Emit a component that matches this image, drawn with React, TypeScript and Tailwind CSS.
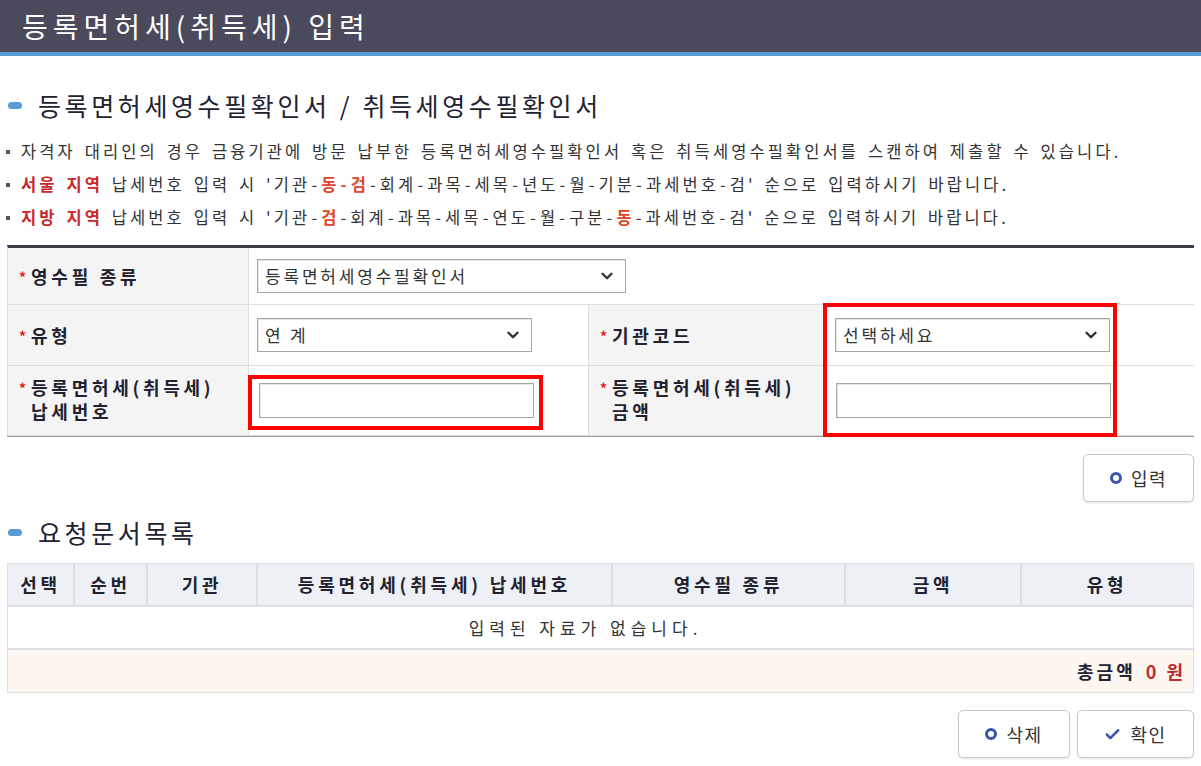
import React from "react";
import { ChevronDown, Check } from "lucide-react";

const Star = () => (
  <span className="text-[#e0201b] text-[14px] font-bold mr-[5px] relative top-[1px] tracking-normal">*</span>
);

const Ring = () => (
  <span className="inline-block w-[12px] h-[12px] rounded-full border-[3px] border-[#3b54b0] mr-[9px]" />
);

const Dash = () => <span className="mx-[1px]">-</span>;

function SelectBox({ text, w }: { text: string; w: string }) {
  return (
    <div
      className={`${w} h-[34px] border border-[#a6a6a6] shadow-[inset_1px_1px_0_#e4e4e4] bg-white flex items-center justify-between pl-[7px] pr-[9px] text-[17px] text-[#333] tracking-[2.8px]`}
    >
      <span>{text}</span>
      <ChevronDown size={18} strokeWidth={3.2} color="#333" />
    </div>
  );
}

function InputBox({ w }: { w: string }) {
  return <div className={`${w} h-[35px] border border-[#a6a6a6] shadow-[inset_1px_1px_0_#e4e4e4] bg-white`} />;
}

const labelCls =
  "bg-[#f4f4f4] border-b border-r border-[#dedede] flex items-center pl-[11px] text-[18px] font-bold text-[#222230] tracking-[3.7px] leading-[24px]";
const valueCls = "border-b border-r border-[#dedede] flex items-center";

export default function App() {
  return (
    <div className="relative w-[1201px] h-[766px] overflow-hidden bg-white font-['Noto_Sans_CJK_KR','Noto_Sans',sans-serif] text-[#333]">
      {/* header */}
      <div className="h-[56px] bg-[#4a4a5c] border-b-[4px] border-[#5b9bd5] flex items-center pl-[22px]">
        <h1 className="text-[28px] text-white tracking-[5px] leading-none">등록면허세(취득세) 입력</h1>
      </div>

      <div className="px-[7px]">
        {/* section heading */}
        <div className="mt-[33px] h-[32px] flex items-center">
          <span className="ml-[1px] w-[14px] h-[7px] rounded-full bg-[#5b9bd5] mr-[16px]" />
          <h2 className="text-[25px] text-[#222230] tracking-[3.6px] leading-none">
            등록면허세영수필확인서 / 취득세영수필확인서
          </h2>
        </div>

        {/* notes */}
        <div className="mt-[14px] text-[16.5px] tracking-[3.1px] [word-spacing:2px]">
          <div className="h-[33px] flex items-center">
            <span className="w-[4px] h-[4px] bg-[#555] mr-[11px] -ml-[1px]" />
            <span>자격자 대리인의 경우 금융기관에 방문 납부한 등록면허세영수필확인서 혹은 취득세영수필확인서를 스캔하여 제출할 수 있습니다.</span>
          </div>
          <div className="h-[33px] flex items-center">
            <span className="w-[4px] h-[4px] bg-[#555] mr-[11px] -ml-[1px]" />
            <span>
              <b className="text-[#c8282a]">서울 지역</b> 납세번호 입력 시 '기관<Dash /><b className="text-[#e0452c]">동<Dash />검</b><Dash />회계<Dash />과목<Dash />세목<Dash />년도<Dash />월<Dash />기분<Dash />과세번호<Dash />검' 순으로 입력하시기 바랍니다.
            </span>
          </div>
          <div className="h-[33px] flex items-center">
            <span className="w-[4px] h-[4px] bg-[#555] mr-[11px] -ml-[1px]" />
            <span>
              <b className="text-[#c8282a]">지방 지역</b> 납세번호 입력 시 '기관<Dash /><b className="text-[#e0452c]">검</b><Dash />회계<Dash />과목<Dash />세목<Dash />연도<Dash />월<Dash />구분<Dash /><b className="text-[#e0452c]">동</b><Dash />과세번호<Dash />검' 순으로 입력하시기 바랍니다.
            </span>
          </div>
        </div>

        {/* form table */}
        <div className="mt-[11px] border-t-[3px] border-[#3d3d4c] border-l border-l-[#dedede] grid grid-cols-[241px_340px_235px_370px] shadow-[0_1px_0_#9a9a9a]">
          <div className={`${labelCls} h-[57px]`}>
            <Star />영수필 종류
          </div>
          <div className={`${valueCls} col-span-3 pl-[8px] border-r-0`}>
            <SelectBox text="등록면허세영수필확인서" w="w-[369px]" />
          </div>

          <div className={`${labelCls} h-[61px]`}>
            <Star />유형
          </div>
          <div className={`${valueCls} pl-[8px]`}>
            <SelectBox text="연 계" w="w-[275px]" />
          </div>
          <div className={labelCls}>
            <Star />기관코드
          </div>
          <div className={`${valueCls} pl-[11px] border-r-0`}>
            <SelectBox text="선택하세요" w="w-[275px]" />
          </div>

          <div className={`${labelCls} h-[70px] items-start pt-[9px]`}>
            <Star />
            <span>
              등록면허세(취득세)
              <br />
              납세번호
            </span>
          </div>
          <div className={`${valueCls} pl-[10px]`}>
            <InputBox w="w-[275px]" />
          </div>
          <div className={`${labelCls} items-start pt-[9px]`}>
            <Star />
            <span>
              등록면허세(취득세)
              <br />
              금액
            </span>
          </div>
          <div className={`${valueCls} pl-[12px] border-r-0`}>
            <InputBox w="w-[275px]" />
          </div>
        </div>

        {/* input button */}
        <div className="mt-[18px] flex justify-end">
          <button className="w-[111px] h-[48px] rounded-[5px] border border-[#c9c9c9] bg-white shadow-[0_1px_2px_rgba(0,0,0,0.12)] flex items-center justify-center text-[18px] text-[#333] tracking-[1.5px]">
            <Ring />입력
          </button>
        </div>

        {/* list heading */}
        <div className="mt-[14px] h-[32px] flex items-center">
          <span className="ml-[1px] w-[14px] h-[7px] rounded-full bg-[#5b9bd5] mr-[16px]" />
          <h2 className="text-[25px] text-[#222230] tracking-[3.6px] leading-none">요청문서목록</h2>
        </div>

        {/* list table */}
        <div className="mt-[15px] border border-[#dcdfe4]">
          <div className="grid grid-cols-[67px_73px_110px_355px_233px_176px_170px] h-[43px] bg-[#edf1f6] text-[18px] font-bold text-[#222230] tracking-[3.8px] border-b-[2px] border-[#dcdfe4]">
            {["선택", "순번", "기관", "등록면허세(취득세) 납세번호", "영수필 종류", "금액", "유형"].map((h, i) => (
              <div
                key={h}
                className={`flex items-center justify-center ${i < 6 ? "border-r-[2px] border-[#dcdfe4]" : ""}`}
              >
                {h}
              </div>
            ))}
          </div>
          <div className="h-[43px] flex items-center justify-center pr-[30px] text-[17px] text-[#333] border-b-[2px] border-[#dcdfe4] tracking-[5px]">
            입력된 자료가 없습니다.
          </div>
          <div className="h-[42px] bg-[#fdf6f1] flex items-center justify-end pr-[7px] text-[18px] font-bold tracking-[3px]">
            <span className="text-[#222230]">총금액</span>
            <span className="text-[#c0282a] ml-[10px]">0 원</span>
          </div>
        </div>

        {/* bottom buttons */}
        <div className="mt-[17px] flex justify-end gap-[7px]">
          <button className="w-[112px] h-[48px] rounded-[5px] border border-[#c9c9c9] bg-white shadow-[0_1px_2px_rgba(0,0,0,0.12)] flex items-center justify-center text-[18px] text-[#333] tracking-[1.5px]">
            <Ring />삭제
          </button>
          <button className="w-[117px] h-[48px] rounded-[5px] border border-[#c9c9c9] bg-white shadow-[0_1px_2px_rgba(0,0,0,0.12)] flex items-center justify-center text-[18px] text-[#333] tracking-[1.5px]">
            <Check size={17} strokeWidth={3.5} color="#3b54b0" className="mr-[9px]" />
            확인
          </button>
        </div>
      </div>

      {/* red annotation boxes */}
      <div className="absolute left-[248px] top-[375px] w-[295px] h-[55px] border-[4px] border-[#ff0000]" />
      <div className="absolute left-[823px] top-[303px] w-[294px] h-[134px] border-[4px] border-[#ff0000]" />
    </div>
  );
}
